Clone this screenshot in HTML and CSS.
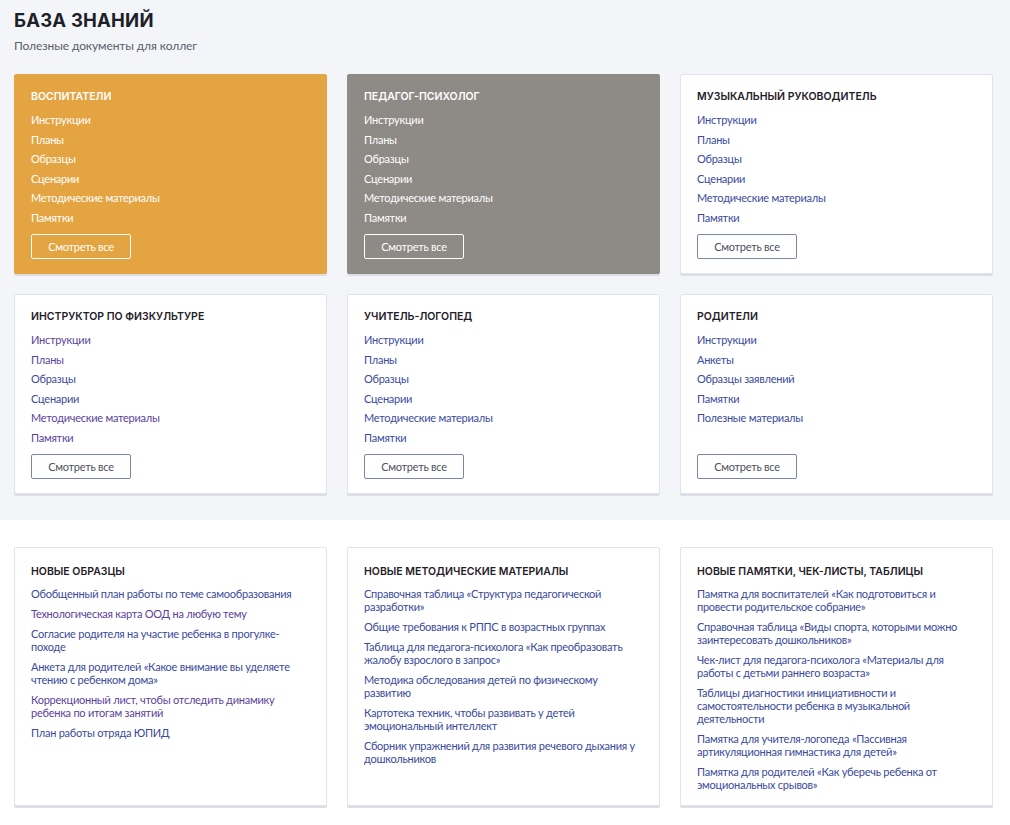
FILE: index.html
```html
<!DOCTYPE html>
<html lang="ru">
<head>
<meta charset="utf-8">
<title>База знаний</title>
<link rel="stylesheet" href="styles.css">
</head>
<body>
<section class="top">
  <h1 class="page-title">БАЗА ЗНАНИЙ</h1>
  <p class="page-sub">Полезные документы для коллег</p>
  <div class="grid">
    <div class="card card-orange">
      <h2 class="card-title">ВОСПИТАТЕЛИ</h2>
      <ul class="links">
        <li><a href="#">Инструкции</a></li>
        <li><a href="#">Планы</a></li>
        <li><a href="#">Образцы</a></li>
        <li><a href="#">Сценарии</a></li>
        <li><a href="#">Методические материалы</a></li>
        <li><a href="#">Памятки</a></li>
      </ul>
      <a class="btn" href="#">Смотреть все</a>
    </div>
    <div class="card card-gray">
      <h2 class="card-title">ПЕДАГОГ-ПСИХОЛОГ</h2>
      <ul class="links">
        <li><a href="#">Инструкции</a></li>
        <li><a href="#">Планы</a></li>
        <li><a href="#">Образцы</a></li>
        <li><a href="#">Сценарии</a></li>
        <li><a href="#">Методические материалы</a></li>
        <li><a href="#">Памятки</a></li>
      </ul>
      <a class="btn" href="#">Смотреть все</a>
    </div>
    <div class="card">
      <h2 class="card-title">МУЗЫКАЛЬНЫЙ РУКОВОДИТЕЛЬ</h2>
      <ul class="links">
        <li><a href="#">Инструкции</a></li>
        <li><a href="#">Планы</a></li>
        <li><a href="#">Образцы</a></li>
        <li><a href="#">Сценарии</a></li>
        <li><a href="#">Методические материалы</a></li>
        <li><a href="#">Памятки</a></li>
      </ul>
      <a class="btn" href="#">Смотреть все</a>
    </div>
    <div class="card">
      <h2 class="card-title">ИНСТРУКТОР ПО ФИЗКУЛЬТУРЕ</h2>
      <ul class="links">
        <li><a class="v" href="#">Инструкции</a></li>
        <li><a class="v" href="#">Планы</a></li>
        <li><a href="#">Образцы</a></li>
        <li><a href="#">Сценарии</a></li>
        <li><a class="v" href="#">Методические материалы</a></li>
        <li><a class="v" href="#">Памятки</a></li>
      </ul>
      <a class="btn" href="#">Смотреть все</a>
    </div>
    <div class="card">
      <h2 class="card-title">УЧИТЕЛЬ-ЛОГОПЕД</h2>
      <ul class="links">
        <li><a href="#">Инструкции</a></li>
        <li><a href="#">Планы</a></li>
        <li><a href="#">Образцы</a></li>
        <li><a href="#">Сценарии</a></li>
        <li><a href="#">Методические материалы</a></li>
        <li><a href="#">Памятки</a></li>
      </ul>
      <a class="btn" href="#">Смотреть все</a>
    </div>
    <div class="card">
      <h2 class="card-title">РОДИТЕЛИ</h2>
      <ul class="links">
        <li><a href="#">Инструкции</a></li>
        <li><a href="#">Анкеты</a></li>
        <li><a href="#">Образцы заявлений</a></li>
        <li><a href="#">Памятки</a></li>
        <li><a href="#">Полезные материалы</a></li>
      </ul>
      <a class="btn" href="#">Смотреть все</a>
    </div>
  </div>
</section>
<section class="bottom">
  <div class="grid">
    <div class="card">
      <h2 class="card-title">НОВЫЕ ОБРАЗЦЫ</h2>
      <ul class="links news">
        <li><a href="#">Обобщенный план работы по теме самообразования</a></li>
        <li><a class="v" href="#">Технологическая карта ООД на любую тему</a></li>
        <li><a href="#">Согласие родителя на участие ребенка в прогулке-походе</a></li>
        <li><a href="#">Анкета для родителей «Какое внимание вы уделяете чтению с ребенком дома»</a></li>
        <li><a class="v" href="#">Коррекционный лист, чтобы отследить динамику ребенка по итогам занятий</a></li>
        <li><a href="#">План работы отряда ЮПИД</a></li>
      </ul>
    </div>
    <div class="card">
      <h2 class="card-title">НОВЫЕ МЕТОДИЧЕСКИЕ МАТЕРИАЛЫ</h2>
      <ul class="links news">
        <li><a href="#">Справочная таблица «Структура педагогической разработки»</a></li>
        <li><a href="#">Общие требования к РППС в возрастных группах</a></li>
        <li><a href="#">Таблица для педагога-психолога «Как преобразовать жалобу взрослого в запрос»</a></li>
        <li><a href="#">Методика обследования детей по физическому развитию</a></li>
        <li><a href="#">Картотека техник, чтобы развивать у детей эмоциональный интеллект</a></li>
        <li><a href="#">Сборник упражнений для развития речевого дыхания у дошкольников</a></li>
      </ul>
    </div>
    <div class="card">
      <h2 class="card-title">НОВЫЕ ПАМЯТКИ, ЧЕК-ЛИСТЫ, ТАБЛИЦЫ</h2>
      <ul class="links news">
        <li><a href="#">Памятка для воспитателей «Как подготовиться и провести родительское собрание»</a></li>
        <li><a href="#">Справочная таблица «Виды спорта, которыми можно заинтересовать дошкольников»</a></li>
        <li><a href="#">Чек-лист для педагога-психолога «Материалы для работы с детьми раннего возраста»</a></li>
        <li><a href="#">Таблицы диагностики инициативности и самостоятельности ребенка в музыкальной деятельности</a></li>
        <li><a href="#">Памятка для учителя-логопеда «Пассивная артикуляционная гимнастика для детей»</a></li>
        <li><a href="#">Памятка для родителей «Как уберечь ребенка от эмоциональных срывов»</a></li>
      </ul>
    </div>
  </div>
</section>
</body>
</html>
```

FILE: styles.css
```css
* { box-sizing: border-box; }
html, body { margin: 0; padding: 0; }
body {
  font-family: Lato, "Noto Sans", sans-serif;
  font-size: 11px;
  letter-spacing: -0.25px;
  color: #2a2d38;
  background: #ffffff;
}
.top {
  background: #f4f5f9;
  padding: 9px 17px 26px 14px;
}
.page-title {
  margin: 0;
  font-family: Inter, "Noto Sans", sans-serif;
  font-size: 18.5px;
  line-height: 22px;
  font-weight: 700;
  letter-spacing: 0.2px;
  color: #1d1f29;
}
.page-sub {
  margin: 7px 0 0;
  font-size: 12px;
  line-height: 15px;
  letter-spacing: -0.1px;
  color: #5a5e6b;
}
.grid {
  display: grid;
  grid-template-columns: repeat(3, 1fr);
  column-gap: 20px;
  row-gap: 20px;
}
.top .grid { margin-top: 21px; }
.bottom {
  padding: 27px 17px 20px 14px;
}
.card {
  display: flex;
  flex-direction: column;
  align-items: flex-start;
  background: #ffffff;
  border: 1px solid #e1e4ef;
  border-radius: 2px;
  box-shadow: 0 2px 0 #dcdee6;
  padding: 15px 16px 14px 16px;
}
.bottom .card { padding-top: 17px; padding-bottom: 11px; }
.card-orange { background: #e4a442; border-color: #e4a442; }
.card-gray { background: #8e8a86; border-color: #8e8a86; }
.card-title {
  margin: 0 0 7px;
  font-family: Inter, "Noto Sans", sans-serif;
  font-size: 10.5px;
  line-height: 13px;
  font-weight: 600;
  color: #1f2029;
  letter-spacing: 0;
}
.bottom .card-title { margin-bottom: 5px; }
.card-orange .card-title, .card-gray .card-title { color: #ffffff; }
.links {
  list-style: none;
  margin: 0 0 7px;
  padding: 0;
  width: 100%;
}
.links li {
  line-height: 13.5px;
  padding: 3px 0;
}
.links a {
  color: #3a4a9c;
  text-decoration: none;
}
.links a.v { color: #5a3f9c; }
.card-orange .links a, .card-gray .links a { color: #ffffff; }
.links.news { margin: 0; }
.news li { line-height: 13px; padding: 3.5px 0; }
.btn {
  margin-top: auto;
  display: inline-flex;
  align-items: center;
  justify-content: center;
  width: 100px;
  height: 25px;
  border: 1px solid #7b86aa;
  border-radius: 2px;
  color: #4d5060;
  text-decoration: none;
  font-size: 11px;
}
.card-orange .btn, .card-gray .btn { border-color: #ffffff; color: #ffffff; }
```
